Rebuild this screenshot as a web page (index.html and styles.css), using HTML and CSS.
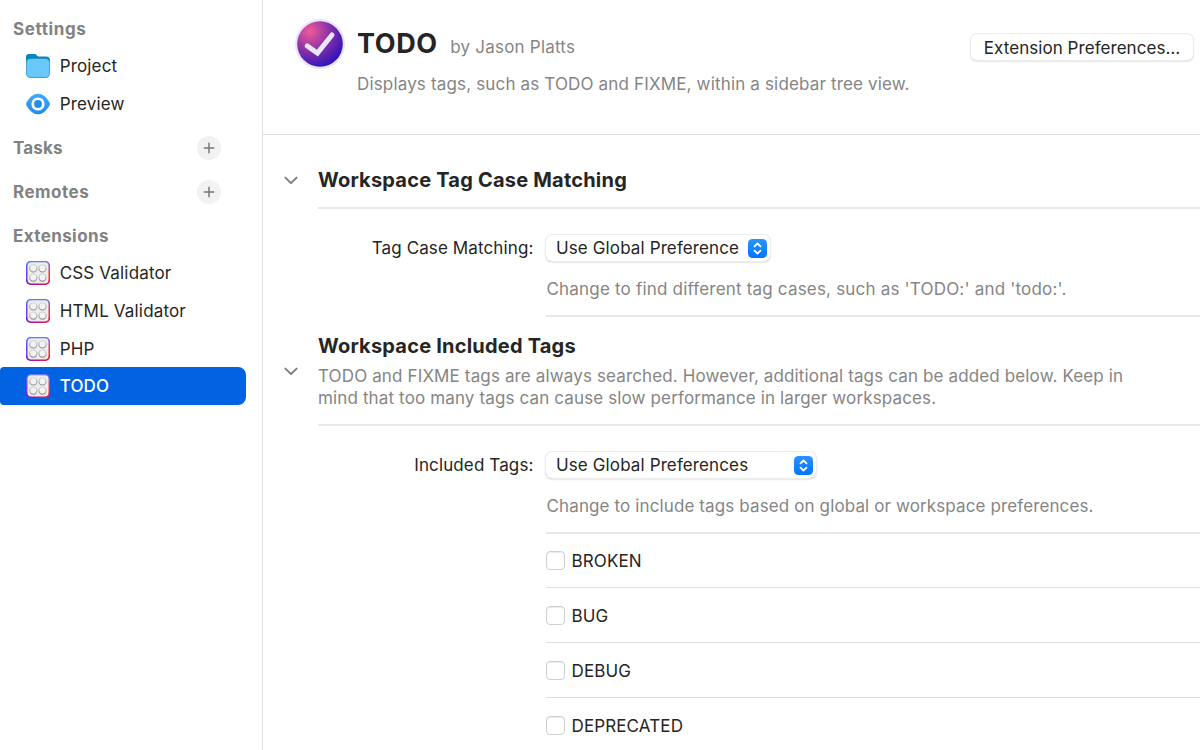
FILE: index.html
```
<!DOCTYPE html>
<html lang="en">
<head>
<meta charset="utf-8">
<title>Extension Settings</title>
<link rel="stylesheet" href="styles.css">
</head>
<body>
<svg class="defs" aria-hidden="true">
  <defs>
    <linearGradient id="brickEdge" x1="0" y1="0" x2="1" y2="0.35">
      <stop offset="0" stop-color="#5a24ff"/><stop offset="0.5" stop-color="#8a62f5"/><stop offset="1" stop-color="#ff2b45"/>
    </linearGradient>
    <linearGradient id="brickTop" x1="0" y1="0" x2="0" y2="1">
      <stop offset="0" stop-color="#5b7cff"/><stop offset="0.5" stop-color="#5b7cff" stop-opacity="0"/>
    </linearGradient>
    <linearGradient id="stud" x1="0" y1="0" x2="0" y2="1">
      <stop offset="0" stop-color="#d6d6d6"/><stop offset="1" stop-color="#8c8c8c"/>
    </linearGradient>
    <linearGradient id="bottomEdge" x1="0" y1="0" x2="1" y2="0">
      <stop offset="0" stop-color="#8411dc"/><stop offset="1" stop-color="#f01c3c"/>
    </linearGradient>
    <symbol id="brick" viewBox="0 0 24 24">
      <rect width="24" height="24" rx="5" fill="url(#brickEdge)"/>
      <rect width="24" height="24" rx="5" fill="url(#brickTop)"/>
      <path d="M0 18v1a5 5 0 0 0 5 5h14a5 5 0 0 0 5-5v-1z" fill="url(#bottomEdge)"/>
      <rect x="1.5" y="1.3" width="21" height="21.2" rx="3.8" fill="#ececee"/>
      <g fill="#f3f3f4" stroke="url(#stud)" stroke-width="1.1"><circle cx="7.3" cy="7.4" r="3.6"/><circle cx="16.5" cy="7.4" r="3.6"/><circle cx="7.3" cy="16.6" r="3.6"/><circle cx="16.5" cy="16.6" r="3.6"/></g>
    </symbol>
    <symbol id="chevron" viewBox="0 0 14 9">
      <path d="M1.4 1.6 7 7.2l5.6-5.6" fill="none" stroke="#7c7c7c" stroke-width="1.9" stroke-linecap="round" stroke-linejoin="round"/>
    </symbol>
    <linearGradient id="stepFill" x1="0" y1="0" x2="0" y2="1">
      <stop offset="0" stop-color="#2b93ff"/><stop offset="1" stop-color="#0076fe"/>
    </linearGradient>
    <symbol id="stepper" viewBox="0 0 19 19">
      <rect width="19" height="19" rx="4.5" fill="url(#stepFill)"/>
      <path d="M6.5 7.3 9.5 4.5l3 2.8M6.5 11.7l3 2.8 3-2.8" fill="none" stroke="#fff" stroke-width="1.8" stroke-linecap="round" stroke-linejoin="round"/>
    </symbol>
    <symbol id="plus" viewBox="0 0 24 24">
      <circle cx="12" cy="12" r="12" fill="#f2f2f2"/>
      <path d="M12 7.3v9.4M7.3 12h9.4" stroke="#777" stroke-width="1.5" stroke-linecap="round"/>
    </symbol>
  </defs>
</svg>
<div class="window">
  <nav class="sidebar">
    <h2 class="group first">Settings</h2>
    <a class="item">
      <svg class="icon" viewBox="0 0 24 24">
        <path d="M0 3a3 3 0 0 1 3-3h5.6c2 0 2 2.4 4 2.4H20a4 4 0 0 1 4 4V12H0z" fill="#0788bd"/>
        <rect x="0" y="4.5" width="24" height="19.5" rx="4.4" fill="#459fcb"/>
        <rect x=".8" y="5" width="22.4" height="18.1" rx="3.8" fill="#68c8f7"/>
      </svg><span>Project</span></a>
    <a class="item">
      <svg class="icon" viewBox="0 0 24 24">
        <defs><linearGradient id="eye" x1="0" y1="0" x2="0" y2="1"><stop offset="0" stop-color="#40aaff"/><stop offset="1" stop-color="#238be8"/></linearGradient></defs>
        <path d="M.5 10.4C3.8 5 7.6 1.7 12 1.7S20.2 5 23.5 10.4q.9 1.5 0 3.1C20.2 19 16.4 22.3 12 22.3S3.8 19 .5 13.5q-.9-1.6 0-3.1z" fill="url(#eye)"/>
        <circle cx="12" cy="12" r="6.6" fill="#fff"/><circle cx="12" cy="12" r="3.9" fill="#248de9"/>
      </svg><span>Preview</span></a>
    <h2 class="group tasks"><span>Tasks</span><svg class="add"><use href="#plus"/></svg></h2>
    <h2 class="group remotes"><span>Remotes</span><svg class="add"><use href="#plus"/></svg></h2>
    <h2 class="group extensions">Extensions</h2>
    <a class="item"><svg class="icon"><use href="#brick"/></svg><span>CSS Validator</span></a>
    <a class="item"><svg class="icon"><use href="#brick"/></svg><span>HTML Validator</span></a>
    <a class="item"><svg class="icon"><use href="#brick"/></svg><span>PHP</span></a>
    <a class="item selected"><svg class="icon"><use href="#brick"/></svg><span>TODO</span></a>
  </nav>
  <main class="content">
    <header class="header">
      <svg class="logo" viewBox="0 0 50 50">
        <defs><radialGradient id="badge" cx=".28" cy=".22" r=".85"><stop offset="0" stop-color="#f05a98"/><stop offset=".5" stop-color="#8a32a8"/><stop offset="1" stop-color="#2c12bb"/></radialGradient></defs>
        <circle cx="25" cy="25" r="25" fill="#e6e4fd"/>
        <circle cx="25" cy="25" r="22.8" fill="url(#badge)"/>
        <path d="M12.3 27 22.4 34 37 16" fill="none" stroke="#e9e6fd" stroke-width="5" stroke-linecap="round" stroke-linejoin="miter"/>
      </svg>
      <div class="intro">
        <div class="title-row"><h1 class="title">TODO</h1><span class="author">by Jason Platts</span></div>
        <p class="description">Displays tags, such as TODO and FIXME, within a sidebar tree view.</p>
      </div>
      <button class="button">Extension Preferences…</button>
    </header>
    <section class="section case">
      <div class="section-head">
        <svg class="chevron"><use href="#chevron"/></svg>
        <h3 class="section-title">Workspace Tag Case Matching</h3>
      </div>
      <div class="field">
        <label class="label">Tag Case Matching:</label>
        <div class="control">
          <div class="select narrow"><span>Use Global Preference</span><svg class="stepper"><use href="#stepper"/></svg></div>
          <p class="hint case-hint">Change to find different tag cases, such as 'TODO:' and 'todo:'.</p>
        </div>
      </div>
    </section>
    <section class="section included">
      <div class="section-head">
        <svg class="chevron"><use href="#chevron"/></svg>
        <div>
          <h3 class="section-title">Workspace Included Tags</h3>
          <p class="section-text">TODO and FIXME tags are always searched. However, additional tags can be added below. Keep in<br>mind that too many tags can cause slow performance in larger workspaces.</p>
        </div>
      </div>
      <div class="field">
        <label class="label">Included Tags:</label>
        <div class="control">
          <div class="select wide"><span>Use Global Preferences</span><svg class="stepper"><use href="#stepper"/></svg></div>
          <p class="hint">Change to include tags based on global or workspace preferences.</p>
          <div class="options">
            <div class="option"><i class="checkbox"></i><span>BROKEN</span></div>
            <div class="option"><i class="checkbox"></i><span>BUG</span></div>
            <div class="option"><i class="checkbox"></i><span>DEBUG</span></div>
            <div class="option"><i class="checkbox"></i><span>DEPRECATED</span></div>
          </div>
        </div>
      </div>
    </section>
  </main>
</div>
</body>
</html>
```
FILE: styles.css
```
* { box-sizing: border-box; }
body { margin: 0; overflow: hidden; background: #fff; color: #252525; font: 17px/22px Inter, sans-serif; letter-spacing: .12px; }
h1, h2, h3, p { margin: 0; }
svg { display: block; flex: none; }
.defs { position: absolute; width: 0; height: 0; }
.window { display: flex; width: 1200px; height: 750px; overflow: hidden; }
.sidebar { flex: none; width: 263px; padding-top: 10px; border-right: 1px solid #dfdfdf; }
.group { display: flex; align-items: center; justify-content: space-between; height: 44px; padding: 0 41px 0 13px; color: #828282; font-size: 17px; font-weight: 650; letter-spacing: .4px; }
.group.first { height: 37.4px; letter-spacing: .6px; }
.tasks { margin-top: 3.4px; letter-spacing: .15px; }
.remotes { letter-spacing: .5px; }
.extensions { height: 40.6px; padding-top: 3.4px; }
.add { width: 24px; height: 24px; }
.item { display: flex; align-items: center; gap: 9.7px; width: 246px; height: 37.6px; padding-left: 26px; letter-spacing: .16px; }
.icon { width: 24px; height: 24px; }
.selected { height: 38px; border-radius: 4px 8px 8px 4px; background: #0162e2; color: #fff; font-weight: 500; }
.content { flex: 1; min-width: 0; }
.header { display: flex; align-items: flex-start; height: 135px; padding: 19px 7px 0 31.5px; border-bottom: 1px solid #e0e0e0; }
.logo { width: 50px; height: 50px; }
.intro { flex: 1; padding: 7px 0 0 12.5px; color: #858585; }
.title-row { display: flex; align-items: baseline; gap: 12.5px; height: 36px; }
.title { color: #252525; font-size: 27px; line-height: 36px; font-weight: 700; letter-spacing: .6px; }
.author { letter-spacing: .22px; }
.description { padding-top: 11px; letter-spacing: .16px; }
.button { width: 222px; height: 26px; margin-top: 15px; padding: 1px 0 0; border: 0; border-radius: 6px; background: #fff; color: #252525; font: inherit; line-height: 26px; letter-spacing: .05px; white-space: nowrap; box-shadow: 0 0 0 1px #ebebeb, 0 1px 2px rgba(0,0,0,.32); }
.section-head { display: flex; align-items: center; padding-left: 21px; }
.section-head > :last-child { flex: 1; align-self: stretch; border-bottom: 2px solid #e8e8e8; }
.chevron { width: 14px; height: 9px; margin-right: 20px; }
.section-title { font-size: 20px; line-height: 26px; font-weight: 700; letter-spacing: .21px; white-space: nowrap; }
.case .section-head { height: 74px; }
.case .section-title { padding-top: 32px; }
.case .chevron { margin-top: 17px; }
.included .section-head { height: 109px; }
.included .section-title { padding-top: 16px; }
.included .chevron { margin-top: 0; }
.section-text { padding-top: 6px; color: #858585; letter-spacing: .135px; white-space: nowrap; }
.field { display: flex; padding-top: 26px; }
.label { width: 270.5px; margin-right: 12.5px; text-align: right; line-height: 26px; }
.control { flex: 1; min-width: 0; }
.select { display: flex; align-items: center; justify-content: space-between; height: 26px; padding: 0 3px 0 10px; border-radius: 6px; box-shadow: 0 0 0 1px #ededed, 0 1px 2px rgba(0,0,0,.32); white-space: nowrap; }
.narrow { width: 224px; }
.wide { width: 270px; }
.stepper { width: 19px; height: 19px; }
.hint { height: 56px; padding: 17px 0 0 .5px; border-bottom: 2px solid #e8e8e8; color: #858585; white-space: nowrap; }
.case-hint { letter-spacing: .19px; }
.options { margin-top: -1px; }
.option { display: flex; align-items: center; gap: 6.5px; height: 55px; border-bottom: 1px solid #dedede; }
.option span { padding-top: 1px; }
.checkbox { width: 19px; height: 19px; border: 1px solid #cfcfcf; border-radius: 4px; background: #fff; box-shadow: inset 0 1px 1px rgba(0,0,0,.08); }
```
